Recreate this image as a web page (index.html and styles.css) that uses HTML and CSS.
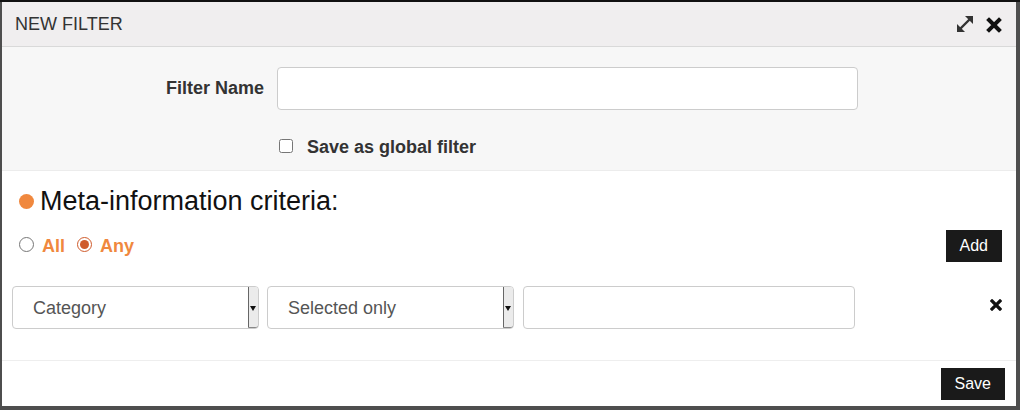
FILE: index.html
```html
<!DOCTYPE html>
<html lang="en">
<head>
    <meta charset="UTF-8">
    <title>New Filter</title>
    <link rel="stylesheet" href="styles.css">
</head>
<body>
    <div class="dialog">
        <div class="dialog-header">
            <span class="dialog-title">NEW FILTER</span>
            <div class="header-tools">
                <svg class="icon-expand" width="20" height="20" viewBox="0 0 20 20">
                    <line x1="5" y1="15" x2="15" y2="5" stroke="#333" stroke-width="2.4"/>
                    <polygon points="10,2 18,2 18,10" fill="#333"/>
                    <polygon points="2,10 2,18 10,18" fill="#333"/>
                </svg>
                <svg class="icon-close" width="16" height="16" viewBox="0 0 16 16">
                    <path d="M3 3 L13 13 M13 3 L3 13" stroke="#111" stroke-width="4" stroke-linecap="square"/>
                </svg>
            </div>
        </div>

        <div class="form-section">
            <label class="form-label" for="filterName">Filter Name</label>
            <input class="text-input name-input" id="filterName" type="text">
            <div class="check-row">
                <input type="checkbox" id="globalFilter">
                <label for="globalFilter">Save as global filter</label>
            </div>
        </div>

        <div class="criteria">
            <h2 class="criteria-title"><span class="dot"></span>Meta-information criteria:</h2>

            <div class="match-row">
                <div class="radios">
                    <input type="radio" name="match" id="matchAll">
                    <label for="matchAll">All</label>
                    <input type="radio" name="match" id="matchAny" checked>
                    <label for="matchAny">Any</label>
                </div>
                <button class="btn">Add</button>
            </div>

            <div class="rule-row">
                <div class="select-wrap">
                    <select class="select">
                        <option>Category</option>
                    </select>
                </div>
                <div class="select-wrap">
                    <select class="select">
                        <option>Selected only</option>
                    </select>
                </div>
                <input class="text-input value-input" type="text">
                <svg class="icon-remove" width="12" height="12" viewBox="0 0 12 12">
                    <path d="M2 2 L10 10 M10 2 L2 10" stroke="#111" stroke-width="3.2" stroke-linecap="square"/>
                </svg>
            </div>
        </div>

        <div class="dialog-footer">
            <button class="btn">Save</button>
        </div>
    </div>
</body>
</html>
```

FILE: styles.css
```css
* {
    margin: 0;
    padding: 0;
    box-sizing: border-box;
}

html, body {
    height: 410px;
    overflow: hidden;
}

body {
    font-family: "Liberation Sans", Arial, sans-serif;
    font-size: 18px;
    color: #333;
    background: #4e4e4e;
    border-top: 2px solid #111;
    padding-left: 2px;
}

.dialog {
    width: 1014px;
    height: 404px;
    background: #fff;
    display: flex;
    flex-direction: column;
}

.dialog-header {
    height: 45px;
    padding: 0 14px 0 13px;
    background: #f0eeef;
    border-bottom: 1px solid #d9d9d9;
    display: flex;
    align-items: center;
    justify-content: space-between;
}

.dialog-title {
    font-size: 18px;
    color: #333;
}

.header-tools {
    display: flex;
    align-items: center;
    gap: 11px;
}

.icon-close {
    margin-top: 1px;
}

.form-section {
    background: #f7f7f7;
    border-bottom: 1px solid #ececec;
    padding: 20px 0 12px;
    display: grid;
    grid-template-columns: 262px 581px;
    column-gap: 13px;
    row-gap: 26px;
    align-items: center;
}

.form-label {
    font-weight: bold;
    text-align: right;
}

.text-input {
    height: 43px;
    border: 1px solid #ccc;
    border-radius: 4px;
    background: #fff;
    font: inherit;
    padding: 0 12px;
}

.name-input {
    width: 581px;
}

.check-row {
    grid-column: 2;
    display: flex;
    align-items: center;
    height: 22px;
    padding-left: 2px;
    gap: 14px;
    font-weight: bold;
}

.check-row input {
    width: 14px;
    height: 14px;
    margin: 0 0 2px 0;
}

.criteria {
    flex: 1;
    padding: 15px 14px 0 10px;
}

.criteria-title {
    display: flex;
    align-items: center;
    height: 30px;
    padding-left: 7px;
    font-size: 27px;
    font-weight: normal;
    color: #111;
    gap: 6px;
}

.dot {
    width: 15px;
    height: 15px;
    border-radius: 50%;
    background: #f0883e;
}

.match-row {
    margin-top: 14px;
    display: flex;
    justify-content: space-between;
    align-items: flex-start;
}

.radios {
    display: flex;
    align-items: center;
    height: 24px;
    margin-top: 4px;
    padding-left: 7px;
    font-weight: bold;
    color: #f0883e;
}

.radios input {
    width: 15px;
    height: 15px;
    margin: 0 8px 3px 0;
    accent-color: #cf5b2c;
}

.radios label {
    margin-right: 12px;
}

.btn {
    height: 32px;
    padding: 0 14px;
    background: #1a1a1a;
    color: #fff;
    border: none;
    border-radius: 0;
    font-family: inherit;
    font-size: 16px;
}

.rule-row {
    margin-top: 24px;
    display: flex;
    align-items: center;
}

.select-wrap {
    position: relative;
    margin-right: 8px;
}

.select-wrap + .select-wrap {
    margin-right: 9px;
}

.select {
    width: 247px;
    height: 43px;
    padding: 0 20px;
    border: 1px solid #ccc;
    border-radius: 4px;
    background: #fff;
    color: #555;
    font: inherit;
    appearance: none;
    -webkit-appearance: none;
}

.select-wrap::before {
    content: "";
    position: absolute;
    right: 1px;
    top: 1px;
    bottom: 1px;
    width: 9px;
    background: #ebebeb;
    border-left: 1px solid #666;
    border-bottom: 1px solid #888;
    border-radius: 0 3px 3px 0;
}

.select-wrap::after {
    content: "";
    position: absolute;
    right: 3px;
    top: 20px;
    border-left: 3px solid transparent;
    border-right: 3px solid transparent;
    border-top: 5px solid #111;
}

.value-input {
    width: 332px;
}

.icon-remove {
    margin-left: auto;
    margin-right: 0;
    margin-top: -6px;
}

.dialog-footer {
    border-top: 1px solid #eee;
    padding: 7px 11px 6px;
    display: flex;
    justify-content: flex-end;
}
```
